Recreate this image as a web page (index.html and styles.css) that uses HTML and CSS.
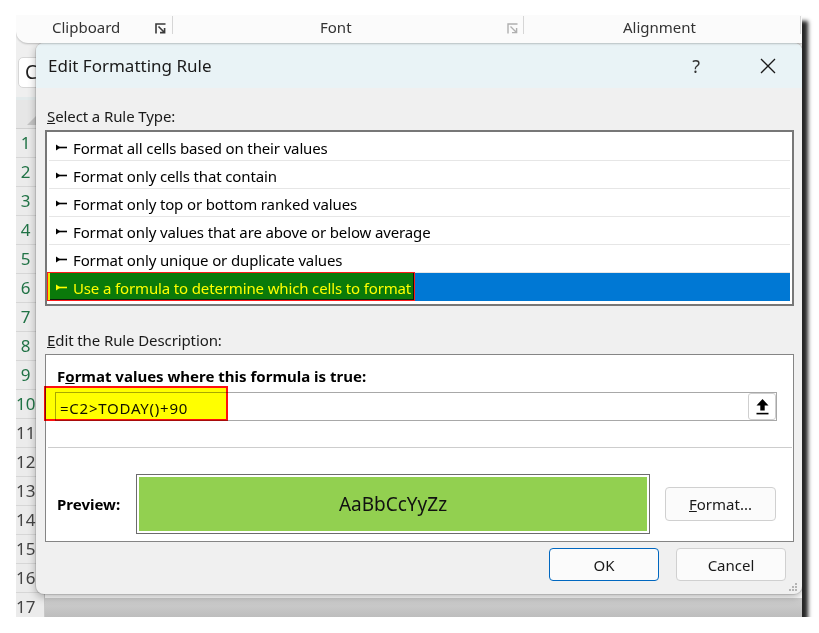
FILE: index.html
```html
<!DOCTYPE html>
<html>
<head>
<meta charset="utf-8">
<link rel="stylesheet" href="styles.css">
</head>
<body>
<div class="shot">
  <div class="ribbon">
    <div class="grp grp-clip">
      <span class="glabel">Clipboard</span>
      <svg class="launch dark" width="11" height="11" viewBox="0 0 11 11"><path d="M1 10.5V1H10.5" fill="none" stroke="currentColor" stroke-width="1.6"/><path d="M3.5 3.5L9.5 9.5M5 9.6H9.6V5" fill="none" stroke="currentColor" stroke-width="1.6"/></svg>
    </div>
    <div class="sep"></div>
    <div class="grp grp-font">
      <span class="glabel">Font</span>
      <svg class="launch light" width="11" height="11" viewBox="0 0 11 11"><path d="M1 10.5V1H10.5" fill="none" stroke="currentColor" stroke-width="1.4"/><path d="M3.5 3.5L9.5 9.5M5 9.6H9.6V5" fill="none" stroke="currentColor" stroke-width="1.4"/></svg>
    </div>
    <div class="sep"></div>
    <div class="grp grp-align">
      <span class="glabel">Alignment</span>
    </div>
    <div class="sep"></div>
  </div>
  <div class="fbar"><div class="namebox">C</div></div>
  <div class="sheet">
    <div class="corner"><span class="tri"></span></div>
    <div class="colhead"></div>
    <div class="rowheads">
      <div class="rh on">1</div>
      <div class="rh on">2</div>
      <div class="rh on">3</div>
      <div class="rh on">4</div>
      <div class="rh on">5</div>
      <div class="rh on">6</div>
      <div class="rh on">7</div>
      <div class="rh on">8</div>
      <div class="rh on">9</div>
      <div class="rh on">10</div>
      <div class="rh">11</div>
      <div class="rh">12</div>
      <div class="rh">13</div>
      <div class="rh">14</div>
      <div class="rh">15</div>
      <div class="rh">16</div>
      <div class="rh">17</div>
    </div>
    <div class="grid"></div>
  </div>

  <div class="dialog">
    <div class="titlebar">
      <span class="title">Edit Formatting Rule</span>
      <span class="help">?</span>
      <svg class="close" width="16" height="16" viewBox="0 0 16 16"><path d="M1 1L15 15M15 1L1 15" stroke="#1a1a1a" stroke-width="1.3"/></svg>
    </div>
    <div class="dbody">
      <div class="label"><u>S</u>elect a Rule Type:</div>
      <div class="list">
        <div class="item"><svg class="bullet" width="11" height="7" viewBox="0 0 11 7"><path d="M0 0.5L4.5 3.5L0 6.5Z"/><rect x="3" y="2.7" width="8" height="1.6"/></svg>Format all cells based on their values</div>
        <div class="item"><svg class="bullet" width="11" height="7" viewBox="0 0 11 7"><path d="M0 0.5L4.5 3.5L0 6.5Z"/><rect x="3" y="2.7" width="8" height="1.6"/></svg>Format only cells that contain</div>
        <div class="item"><svg class="bullet" width="11" height="7" viewBox="0 0 11 7"><path d="M0 0.5L4.5 3.5L0 6.5Z"/><rect x="3" y="2.7" width="8" height="1.6"/></svg>Format only top or bottom ranked values</div>
        <div class="item"><svg class="bullet" width="11" height="7" viewBox="0 0 11 7"><path d="M0 0.5L4.5 3.5L0 6.5Z"/><rect x="3" y="2.7" width="8" height="1.6"/></svg>Format only values that are above or below average</div>
        <div class="item"><svg class="bullet" width="11" height="7" viewBox="0 0 11 7"><path d="M0 0.5L4.5 3.5L0 6.5Z"/><rect x="3" y="2.7" width="8" height="1.6"/></svg>Format only unique or duplicate values</div>
        <div class="item sel"><span class="hl"><svg class="bullet" width="11" height="7" viewBox="0 0 11 7"><path d="M0 0.5L4.5 3.5L0 6.5Z"/><rect x="3" y="2.7" width="8" height="1.6"/></svg>Use a formula to determine which cells to format</span></div>
      </div>
      <div class="label desc-label"><u>E</u>dit the Rule Description:</div>
      <div class="desc">
        <div class="desc-title">F<u>o</u>rmat values where this formula is true:</div>
        <div class="formula">
          <span class="ftext">=C2&gt;TODAY()+90</span>
          <span class="mark"></span>
          <span class="rangebtn"><svg width="13" height="16" viewBox="0 0 13 16"><path d="M6.5 0L12.5 6.5H8.7V11.5H4.3V6.5H0.5Z" fill="#000"/><rect x="0.5" y="13.8" width="12" height="1.6" fill="#000"/></svg></span>
        </div>
        <div class="hr"></div>
        <div class="preview-row">
          <span class="pv-label">Preview:</span>
          <div class="pv-box"><div class="pv-fill">AaBbCcYyZz</div></div>
          <button class="btn fmt"><u>F</u>ormat...</button>
        </div>
      </div>
      <div class="actions">
        <button class="btn ok">OK</button>
        <button class="btn">Cancel</button>
      </div>
    </div>
    <svg class="grip" width="9" height="9" viewBox="0 0 9 9" fill="#b4b4b4"><rect x="6" y="0" width="2" height="2"/><rect x="3" y="3" width="2" height="2"/><rect x="6" y="3" width="2" height="2"/><rect x="0" y="6" width="2" height="2"/><rect x="3" y="6" width="2" height="2"/><rect x="6" y="6" width="2" height="2"/></svg>
  </div>
</div>
</body>
</html>
```

FILE: styles.css
```css
html, body {
  margin: 0;
  background: #fff;
}
body {
  font-family: "Noto Sans", "Open Sans", sans-serif;
}
.shot {
  position: relative;
  margin: 15px 0 0 16px;
  width: 786px;
  height: 602px;
  overflow: hidden;
  background: #f0f0f0;
  box-shadow: 6px 6px 4px rgba(0, 0, 0, 0.85);
}

/* ribbon */
.ribbon {
  position: relative;
  z-index: 1;
  height: 28px;
  display: flex;
  background: #fbfbfb;
  border-bottom-left-radius: 12px;
  box-shadow: 0 1px 2px rgba(0, 0, 0, 0.22);
  font-size: 15px;
  color: #333;
}
.grp {
  display: flex;
  align-items: center;
  height: 28px;
}
.glabel { margin-bottom: 4px; }
.grp-clip { width: 156px; }
.grp-clip .glabel { margin-left: 36px; }
.grp-clip .launch { margin-left: auto; margin-right: 6px; margin-bottom: 2px; }
.grp-font { width: 350px; }
.grp-font .glabel { margin-left: 147px; }
.grp-font .launch { margin-left: auto; margin-right: 5px; margin-bottom: 2px; }
.grp-align { width: 276px; }
.grp-align .glabel { margin-left: 99px; }
.launch.dark { color: #3a3a3a; }
.launch.light { color: #b0b0b0; }
.sep {
  width: 1px;
  height: 18px;
  margin-top: 1px;
  background: #d6d6d6;
}

/* formula bar */
.fbar {
  height: 57px;
  box-sizing: border-box;
  padding: 14px 0 0 2px;
  background: #efefef;
  border-bottom: 3px solid #e3eaeb;
}
.namebox {
  width: 60px;
  height: 31px;
  box-sizing: border-box;
  border: 1px solid #d6d6d6;
  border-radius: 5px;
  background: #fff;
  font-size: 19px;
  line-height: 29px;
  padding-left: 6px;
  color: #222;
}

/* sheet */
.sheet {
  display: grid;
  grid-template-columns: 29px 1fr;
  grid-template-rows: 29px 1fr;
  height: 517px;
}
.corner {
  position: relative;
  background: #e6e6e6;
  border-right: 1px solid #cfcfcf;
  border-bottom: 1px solid #cfcfcf;
}
.tri {
  position: absolute;
  right: 3px;
  bottom: 3px;
  width: 0;
  height: 0;
  border-left: 14px solid transparent;
  border-bottom: 14px solid #c4c4c4;
}
.colhead {
  background: #e6e6e6;
  border-bottom: 1px solid #cfcfcf;
}
.rowheads {
  background: #ebebeb;
  border-right: 1px solid #c8c8c8;
}
.rh {
  height: 29px;
  box-sizing: border-box;
  border-bottom: 1px solid #d6d6d6;
  font-size: 17px;
  line-height: 28px;
  text-align: center;
  padding-right: 9px;
  color: #444;
}
.rh.on { color: #217346; }
.grid {
  background: linear-gradient(#d0d0d0, #b8b8b8) bottom / 100% 24px no-repeat, #fff;
}

/* dialog */
.dialog {
  position: absolute;
  left: 20px;
  top: 28px;
  width: 766px;
  height: 551px;
  background: #f0f0f0;
  border-radius: 8px;
  box-shadow: 0 3px 8px rgba(0, 0, 0, 0.3), 0 0 0 1px rgba(0, 0, 0, 0.1);
  overflow: hidden;
  display: flex;
  flex-direction: column;
  font-size: 15px;
  color: #000;
}
.titlebar {
  flex: none;
  height: 45px;
  display: flex;
  align-items: center;
  padding-left: 12px;
  background: #e9f3f6;
}
.title {
  flex: 1;
  font-size: 17px;
  color: #1a1a1a;
}
.help {
  font-size: 18px;
  color: #333;
  margin-right: 60px;
}
.close { margin-right: 26px; }

.dbody {
  flex: 1;
  display: flex;
  flex-direction: column;
  padding: 18px 8px 0 9px;
}
.label {
  line-height: 20px;
  margin-left: 2px;
  color: #1a1a1a;
  letter-spacing: -0.1px;
}
.list {
  margin-top: 4px;
  height: 176px;
  box-sizing: border-box;
  border: 2px solid #777;
  background: #fff;
  padding: 1px 2px;
  letter-spacing: -0.14px;
}
.item {
  height: 28px;
  box-sizing: border-box;
  border-bottom: 1px solid #e6e6e6;
  display: flex;
  align-items: center;
  padding: 3px 0 0 7px;
  white-space: nowrap;
}
.bullet {
  flex: none;
  margin-right: 6px;
  margin-bottom: 2px;
  fill: #000;
}
.item.sel {
  background: #0078d4;
  border-bottom: none;
  padding: 0;
  height: 28px;
}
.hl {
  display: flex;
  align-items: center;
  box-sizing: border-box;
  width: 368px;
  height: 29px;
  margin-left: -2px;
  margin-top: -1px;
  padding: 3px 0 0 8px;
  border: 1px solid #ff1a1a;
  background: #0a7a0a;
  box-shadow: inset 2px 0 0 #e8e800, inset -1px -1px 0 #0b1f0b;
  color: #ffff00;
}
.hl .bullet { fill: #ffff00; }
.desc-label { margin-top: 24px; }
.desc {
  margin-top: 4px;
  height: 188px;
  box-sizing: border-box;
  border: 1px solid #858585;
  background: #fff;
  padding: 11px 16px 0 9px;
  display: flex;
  flex-direction: column;
}
.desc-title {
  font-weight: bold;
  line-height: 20px;
  margin-left: 2px;
}
.formula {
  position: relative;
  margin-top: 6px;
  height: 29px;
  box-sizing: border-box;
  border: 1px solid #a8a8a8;
  display: flex;
  align-items: center;
  padding-left: 4px;
}
.ftext {
  color: #111;
  letter-spacing: 0.75px;
  padding-top: 2px;
}
.mark {
  position: absolute;
  left: -12px;
  top: -7px;
  width: 184px;
  height: 35px;
  box-sizing: border-box;
  border: 2px solid #ff1010;
  background: #ffff00;
  mix-blend-mode: multiply;
}
.rangebtn {
  margin-left: auto;
  width: 28px;
  height: 27px;
  box-sizing: border-box;
  border: 1px solid #cfcfcf;
  border-radius: 3px;
  background: #fff;
  display: flex;
  align-items: center;
  justify-content: center;
}
.hr {
  margin: 26px -15px 0 -7px;
  height: 1px;
  background: #cdcdcd;
}
.preview-row {
  margin-top: 26px;
  display: flex;
  align-items: center;
  height: 60px;
}
.pv-label {
  font-weight: bold;
  width: 79px;
  margin-left: 2px;
}
.pv-box {
  width: 514px;
  height: 60px;
  box-sizing: border-box;
  border: 1px solid #6c6c6c;
  padding: 2px;
}
.pv-fill {
  height: 100%;
  background: #92d050;
  display: flex;
  align-items: center;
  justify-content: center;
  font-size: 19px;
  color: #111;
}
.btn {
  font-family: inherit;
  font-size: 15px;
  color: #1a1a1a;
  background: #fbfbfb;
  border: 1px solid #d0d0d0;
  border-radius: 4px;
  padding: 0;
}
.fmt {
  margin-left: 15px;
  width: 111px;
  height: 34px;
}
.actions {
  margin-top: 6px;
  margin-right: 8px;
  display: flex;
  justify-content: flex-end;
  gap: 17px;
}
.actions .btn {
  width: 110px;
  height: 33px;
}
.btn.ok { border-color: #0067c0; }
.grip {
  position: absolute;
  right: 4px;
  bottom: 2px;
}
```
